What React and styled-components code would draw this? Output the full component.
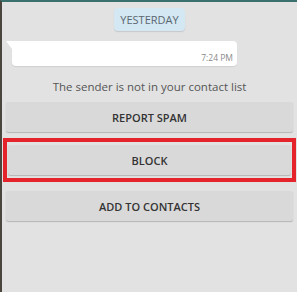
import React from "react";
import styled, { createGlobalStyle } from "styled-components";

const Global = createGlobalStyle`
  html, body {
    margin: 0;
    padding: 0;
    background: #e2e2e2;
  }
  body {
    font-family: "Open Sans", "Liberation Sans", sans-serif;
  }
`;

const Screen = styled.div`
  width: 297px;
  height: 292px;
  box-sizing: border-box;
  background: #e2e2e2;
  border-top: 2px solid #3a716d;
  border-left: 2px solid #4a463e;
  display: flex;
  flex-direction: column;
  align-items: stretch;
  overflow: hidden;
`;

const DateRow = styled.div`
  display: flex;
  justify-content: center;
  padding-top: 6px;
`;

const DatePill = styled.div`
  background: #d3e8f2;
  color: #5a6670;
  font-size: 11px;
  padding: 4px 6px;
  border-radius: 4px;
  box-shadow: 0 1px 1px rgba(0, 0, 0, 0.12);
`;

const Bubble = styled.div`
  position: relative;
  margin: 10px 60px 0 10px;
  height: 25px;
  background: #fff;
  border-radius: 0 4px 4px 4px;
  box-shadow: 0 1px 1px rgba(0, 0, 0, 0.08);
  display: flex;
  align-items: flex-end;
  justify-content: flex-end;
  padding: 0 4px 3px 0;
  box-sizing: border-box;

  &::before {
    content: "";
    position: absolute;
    left: -6px;
    top: 0;
    border-top: 8px solid #fff;
    border-left: 6px solid transparent;
  }
`;

const Time = styled.span`
  font-size: 8.5px;
  color: #8a8a8a;
`;

const Notice = styled.div`
  text-align: center;
  color: #555;
  font-size: 11.5px;
  margin-top: 13px;
`;

const ButtonSlot = styled.div`
  margin: ${(p) => p.$margin};
  padding: ${(p) => (p.$highlight ? "3px 1px" : "0")};
  border: ${(p) => (p.$highlight ? "4px solid #e5232a" : "none")};
`;

const ActionButton = styled.div`
  height: 30px;
  background: #d9d9d9;
  border-radius: 2px;
  box-shadow: 0 1px 1px rgba(0, 0, 0, 0.2);
  display: flex;
  align-items: center;
  justify-content: center;
  font-size: 11px;
  font-weight: 600;
  color: #333;
`;

export default function App() {
  return (
    <>
      <Global />
      <Screen>
        <DateRow>
          <DatePill>YESTERDAY</DatePill>
        </DateRow>
        <Bubble>
          <Time>7:24 PM</Time>
        </Bubble>
        <Notice>The sender is not in your contact list</Notice>
        <ButtonSlot $margin="8px 4px 0 4px">
          <ActionButton>REPORT SPAM</ActionButton>
        </ButtonSlot>
        <ButtonSlot $margin="6px 1px 0 1px" $highlight>
          <ActionButton>BLOCK</ActionButton>
        </ButtonSlot>
        <ButtonSlot $margin="9px 4px 0 4px">
          <ActionButton>ADD TO CONTACTS</ActionButton>
        </ButtonSlot>
      </Screen>
    </>
  );
}
